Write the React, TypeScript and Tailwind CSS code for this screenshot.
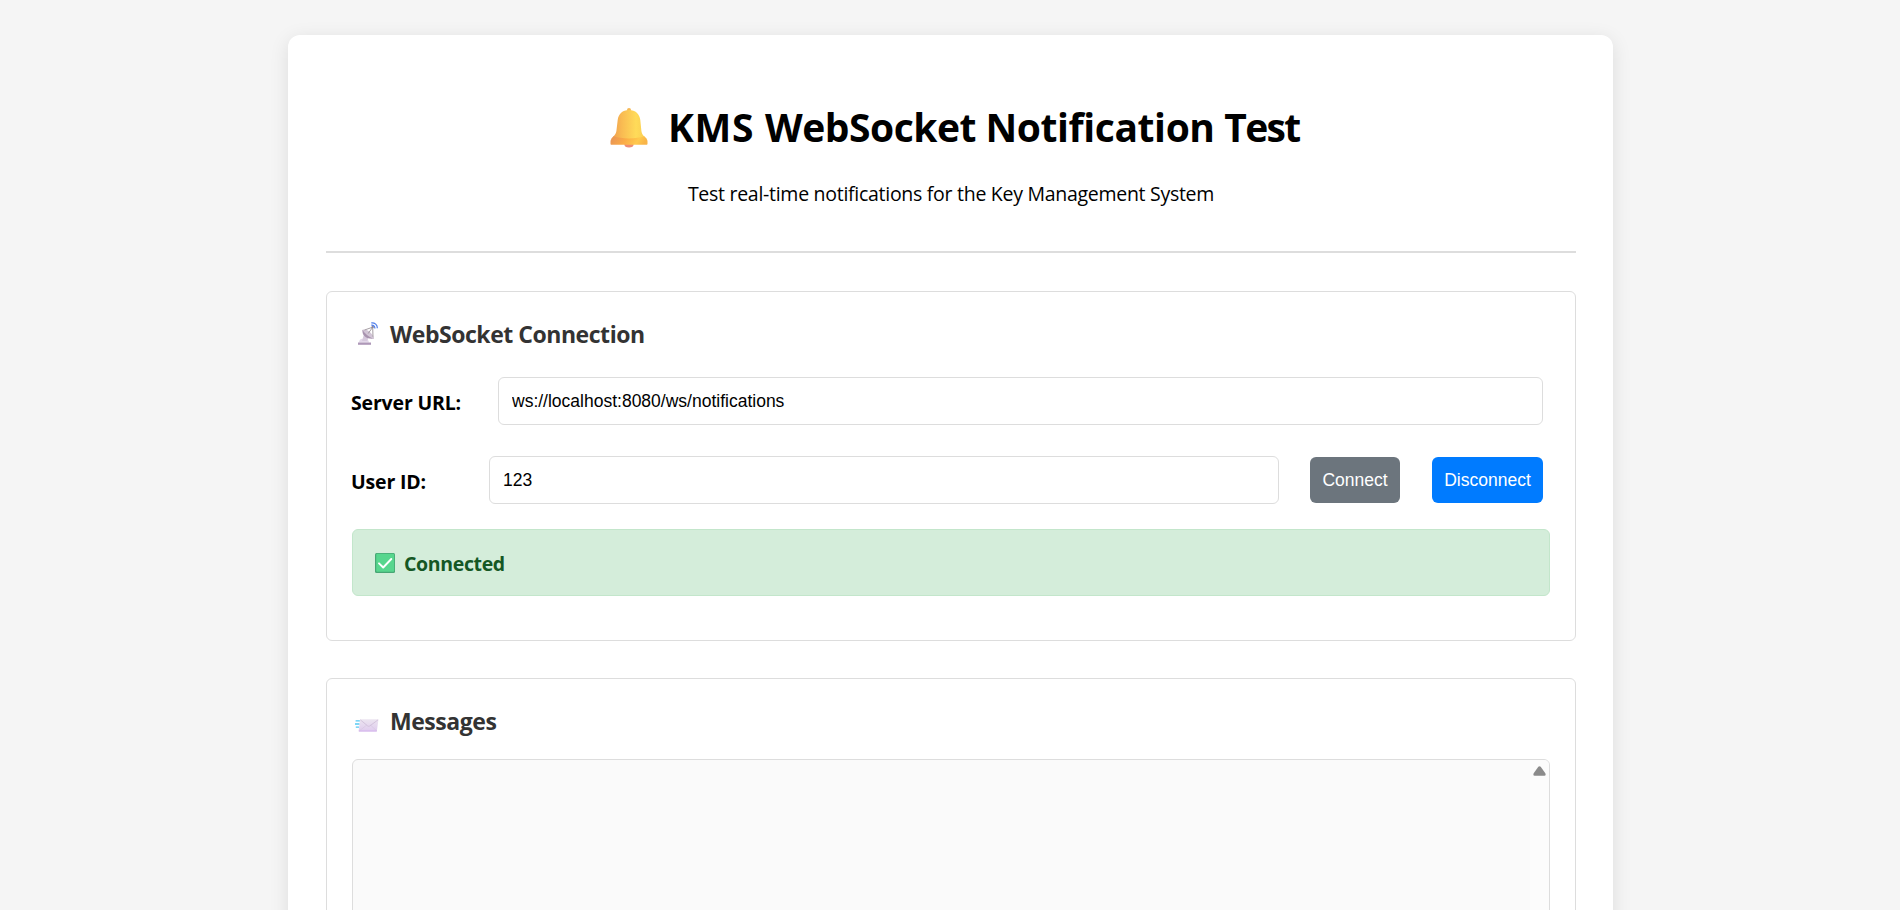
import type { ReactNode } from 'react';

function BellIcon() {
  return (
    <svg width="38" height="42" viewBox="0 0 38 42" className="shrink-0">
      <defs>
        <linearGradient id="bell" x1="0" x2="1" y1="0" y2="0">
          <stop offset="0" stopColor="#ee9c50" />
          <stop offset="0.3" stopColor="#f9bb52" />
          <stop offset="0.7" stopColor="#ffdb59" />
          <stop offset="1" stopColor="#f9cc52" />
        </linearGradient>
        <linearGradient id="rim" x1="0" x2="1" y1="0" y2="0.15">
          <stop offset="0" stopColor="#e69258" />
          <stop offset="0.45" stopColor="#fbab46" />
          <stop offset="0.8" stopColor="#ffc94c" />
          <stop offset="1" stopColor="#f9b548" />
        </linearGradient>
      </defs>
      <ellipse cx="19" cy="37.500" rx="4.6" ry="3" fill="#ef8d72" />
      <circle cx="19" cy="3" r="2" fill="#f6b955" />
      <path d="M19 3c-6.500 0-10.600 4-11.300 10L6.400 24c-.3 2.300-1.400 4-3 5.600L1.200 32h35.600l-2.600-2.400c-1.600-1.600-2.500-3.300-2.800-5.600L30.300 13C29.600 7 25.500 3 19 3z" fill="url(#bell)" />
      <path d="M3.500 29.300c8 2.800 22.800 2.800 30.800 0l2.200 2.500c.7.900 1 1.700 1 2.800v2.200c0 .6-.4 1-1 1h-35c-.6 0-1-.4-1-1v-2.200c0-1.100.3-1.900 1-2.800z" fill="url(#rim)" />
    </svg>
  );
}

function DishIcon() {
  return (
    <svg width="21" height="24" viewBox="0 0 21 24" className="shrink-0">
      <path d="M1 20.500c0-2 1.400-3.700 3.400-3.700h3.200c2 0 3 1.700 3.400 3.700z" fill="#e3d8ea" />
      <path d="M6 12l5 3-2 4H4z" fill="#d6c9dd" />
      <path d="M0 20.500h13v2.300H0z" fill="#ae98b8" />
      <path d="M4.500 8.200c-.8 4.400 3.400 9.200 11 8.400.6-.1.700-.5.300-.9L5.500 7.900c-.4-.3-.9-.2-1 .3z" fill="#a893af" />
      <path d="M5.300 7.700c1.800-.5 5 .8 7.300 3 2.400 2.200 3.700 4.500 3 5.200-.9.700-4-.7-6.600-3-2.600-2.200-4.600-4.600-3.700-5.200z" fill="#d2c5d6" />
      <path d="M6.500 8l8.200-2.800.3 9.600M10.200 11.500l4.500-6.300" fill="none" stroke="#9b9299" strokeWidth="0.9" />
      <circle cx="14.700" cy="5" r="1.200" fill="#8f8795" />
      <path d="M13.300.9c3.500-.4 6.200 2 6 5.400M13.300 3.200c2.200-.2 3.700 1.100 3.600 3.300" fill="none" stroke="#4d7cea" strokeWidth="1.200" />
    </svg>
  );
}

function EnvelopeIcon() {
  return (
    <svg width="24" height="13" viewBox="0 0 24 13" className="shrink-0">
      <defs>
        <linearGradient id="mail" x1="0" x2="0" y1="0" y2="1">
          <stop offset="0" stopColor="#ece5f0" />
          <stop offset="1" stopColor="#dfcbee" />
        </linearGradient>
      </defs>
      <path d="M5.600.3h17.100c.5 0 .8.300.7.800l-1.500 10.700c-.1.500-.4.700-.9.700H4.300c-.5 0-.7-.3-.6-.7L5 .9c.1-.4.300-.6.600-.6z" fill="url(#mail)" />
      <path d="M4.200 11.900l7.400-5.700M21.600 11.900l-6-5.700" stroke="#d6c7df" strokeWidth="0.700" />
      <path d="M5.300.8l7.200 6c.8.600 1.600.6 2.500 0L23.100.8" fill="none" stroke="#cdbdd7" strokeWidth="0.800" />
      <path d="M3.800 12h18" stroke="#d3b0ec" strokeWidth="0.900" />
      <path d="M.6 1.800h4.200M0 5h4.400M.8 8.200H4" stroke="#55c9f3" strokeWidth="1.300" />
    </svg>
  );
}

function CheckIcon() {
  return (
    <svg width="20" height="20" viewBox="0 0 20 20" className="mt-px shrink-0">
      <rect width="20" height="20" rx="1.500" fill="#47a674" />
      <rect x="1.200" y="0.700" width="18" height="18" rx="1" fill="#57d68d" />
      <path d="M4 10.300l4.200 4.200L16.300 6" fill="none" stroke="#fff" strokeWidth="1.900" strokeLinecap="round" strokeLinejoin="round" />
    </svg>
  );
}

function Section({ icon, title, children, className }: { icon: ReactNode; title: string; children: ReactNode; className: string }) {
  return (
    <section className={`rounded-md border border-[#ddd] px-[25px] pt-[25px] ${className}`}>
      <h3 className="flex h-8 items-center text-[23px] leading-8 font-bold tracking-[-0.46px] text-[#333]">
        <span className="flex w-[38px] shrink-0">{icon}</span>
        <span className="pt-px">{title}</span>
      </h3>
      {children}
    </section>
  );
}

const field = 'h-12 min-w-0 rounded-md border border-[#ddd] bg-white px-[13px] font-["Liberation_Sans",Arial,sans-serif] text-[17.5px] text-black outline-none';
const label = '-ml-px shrink-0 pt-1 text-[19.5px] leading-[30px] font-bold tracking-[-0.17px]';
const button = 'h-[46px] shrink-0 rounded-md text-center font-["Liberation_Sans",Arial,sans-serif] text-[17.5px] text-white';

export default function App() {
  return (
    <div className='h-screen overflow-hidden bg-[#f5f5f5] pt-[35px] font-["Open_Sans","Noto_Sans",sans-serif] text-black'>
      <main className="ml-[288px] h-[1200px] w-[1325px] rounded-[12px] bg-white pt-[38px] pr-[37px] pl-[38px] shadow-[0_4px_19px_rgba(0,0,0,0.1)]">
        <header className="h-[180px] border-b-2 border-[#ddd] pt-6 text-center">
          <h1 className="flex h-[60px] items-center pl-[284px] text-[39px] leading-[60px] font-bold tracking-[-0.44px] whitespace-nowrap">
            <span className="mr-5 flex pt-px"><BellIcon /></span>
            <span>
              <span className="tracking-[0.7px]">KMS </span>
              <span className="tracking-[-0.5px]">WebSocket </span>
              <span className="tracking-[-0.4px]">Notification </span>
              <span className="tracking-[-1.7px]">Test</span>
            </span>
          </h1>
          <p className="mt-[22px] text-[19.5px] leading-[30px] tracking-[-0.28px]">
            Test real-time notifications for the Key Management System
          </p>
        </header>

        <Section title="WebSocket Connection" icon={<span className="ml-[6px] pt-px"><DishIcon /></span>} className="mt-[38px] h-[350px]">
          <div className="mt-[28px] flex items-center pr-[7px]">
            <label htmlFor="url" className={`${label} w-[147px]`}>Server URL:</label>
            <input id="url" className={`${field} flex-1`} defaultValue="ws://localhost:8080/ws/notifications" />
          </div>
          <div className="mt-[31px] flex items-center pr-[7px]">
            <label htmlFor="user" className={`${label} w-[138px]`}>User ID:</label>
            <input id="user" className={`${field} flex-1`} defaultValue="123" />
            <button className={`${button} ml-[31px] w-[90px] bg-[#6c757d]`}>Connect</button>
            <button className={`${button} ml-8 w-[111px] bg-[#007bff]`}>Disconnect</button>
          </div>
          <div className="mt-[25px] flex h-[67px] items-center rounded-md border border-[#c3e6cb] bg-[#d4edda] pl-[22px] text-[19.5px] font-bold tracking-[-0.35px] text-[#155724]">
            <CheckIcon />
            <span className="ml-[9px] pt-[3px]">Connected</span>
          </div>
        </Section>

        <Section title="Messages" icon={<span className="ml-[3px] pt-[11px]"><EnvelopeIcon /></span>} className="mt-[37px] h-[480px]">
          <div className="mt-[23px] flex h-[375px] justify-end overflow-hidden rounded-md border border-[#ddd] bg-[#fafafa]">
            <div className="flex w-[19px] justify-center bg-[#fcfcfc] pt-[6px]">
              <svg width="13" height="10" viewBox="0 0 13 10">
                <path d="M5.300.8Q6.500-.4 7.700.8l4.600 6.500Q13.300 9.800 11.300 9.800H1.700Q-.3 9.800.7 7.300z" fill="#8b8b8b" />
              </svg>
            </div>
          </div>
        </Section>
      </main>
    </div>
  );
}
